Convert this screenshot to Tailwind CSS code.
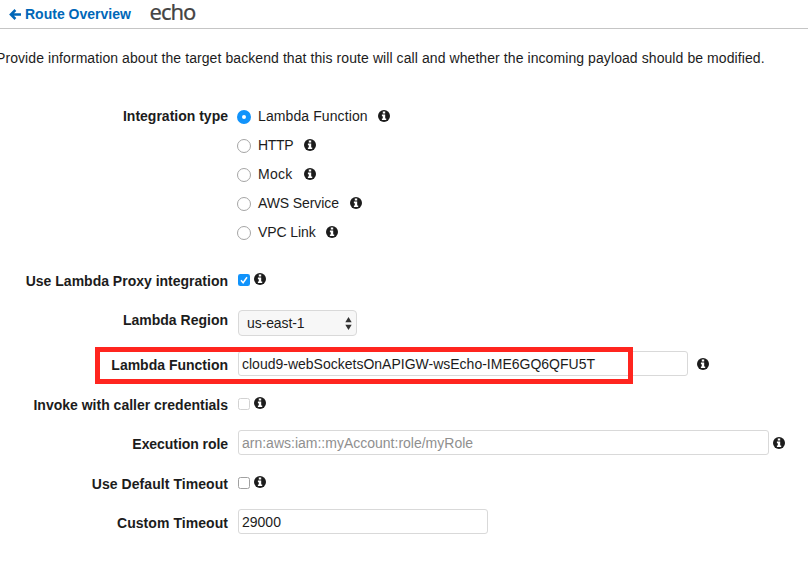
<!DOCTYPE html>
<html lang="en">
<head>
<meta charset="utf-8">
<title>Route Overview</title>
<script src="https://cdn.jsdelivr.net/npm/@tailwindcss/browser@4"></script>
</head>
<body class="relative h-[564px] w-[808px] overflow-hidden bg-white font-['Helvetica_Neue','Liberation_Sans',sans-serif] text-[14px] leading-5 text-[#1c1c1c]">
<svg class="hidden">
  <symbol id="info" viewBox="0 0 12 12"><circle cx="6" cy="6" r="6" fill="#1c1c1c"/><path d="M4.8 1.6h2.4v2H4.8zM3.9 4.6h3.3v3.8h1V10H3.9V8.4h.9V6.2h-.9z" fill="#fff"/></symbol>
</svg>
<header class="flex h-[29px] border-b border-[#c5c5c5]">
  <a class="flex pl-[9px] pt-1 font-bold text-[#0067b8]"><svg class="mt-[5px] mr-1 h-[12px] w-3" viewBox="0 0 12 12"><path d="M6.4 1 1.9 5.5 6.4 10M2.2 5.5H12" fill="none" stroke="#0067b8" stroke-width="2.5"/></svg><span class="w-[107px] whitespace-nowrap">Route Overview</span></a>
  <h1 class="pl-[17.5px] font-['Noto_Sans','Open_Sans',sans-serif] text-[22px] leading-[22px] tracking-[-1px] text-[#444] [-webkit-text-stroke:0.2px_#444]">echo</h1>
</header>
<p class="-ml-[4px] mt-[19px] whitespace-nowrap tracking-[0.08px]">Provide information about the target backend that this route will call and whether the incoming payload should be modified.</p>
<main class="pt-[34px]">
  <section class="flex h-[168px]">
    <div class="w-[228px] pt-1 text-right font-bold">Integration type</div>
    <div class="ml-[9px]">
      <label class="flex h-[29px]"><i class="mt-[8px] mr-[7px] h-[14px] w-[14px] rounded-full border-5 border-[#1193fb] bg-white"></i><span class="mt-1 w-[109px] whitespace-nowrap tracking-[0.1px]">Lambda Function</span><svg class="mt-[8px] ml-[11px] h-3 w-3"><use href="#info"/></svg></label>
      <label class="flex h-[29px]"><i class="mt-[8px] mr-[7px] h-[14px] w-[14px] rounded-full border border-[#a5a5a5]"></i><span class="mt-1 w-[35px] whitespace-nowrap tracking-[-0.3px]">HTTP</span><svg class="mt-[8px] ml-[11px] h-3 w-3"><use href="#info"/></svg></label>
      <label class="flex h-[29px]"><i class="mt-[8px] mr-[7px] h-[14px] w-[14px] rounded-full border border-[#a5a5a5]"></i><span class="mt-1 w-[35px] whitespace-nowrap tracking-[0.3px]">Mock</span><svg class="mt-[8px] ml-[11px] h-3 w-3"><use href="#info"/></svg></label>
      <label class="flex h-[29px]"><i class="mt-[8px] mr-[7px] h-[14px] w-[14px] rounded-full border border-[#a5a5a5]"></i><span class="mt-1 w-[81px] whitespace-nowrap tracking-[-0.1px]">AWS Service</span><svg class="mt-[8px] ml-[11px] h-3 w-3"><use href="#info"/></svg></label>
      <label class="flex h-[29px]"><i class="mt-[8px] mr-[7px] h-[14px] w-[14px] rounded-full border border-[#a5a5a5]"></i><span class="mt-1 w-[57px] whitespace-nowrap tracking-[-0.1px]">VPC Link</span><svg class="mt-[8px] ml-[11px] h-3 w-3"><use href="#info"/></svg></label>
    </div>
  </section>
  <div class="flex h-10">
    <div class="w-[228px] pt-px text-right font-bold">Use Lambda Proxy integration</div>
    <svg class="mt-1 ml-[10px] h-3 w-3" viewBox="0 0 12 12"><rect width="12" height="12" rx="2.3" fill="#1193fb"/><path d="m3 6.3 2.1 2.4L9 3.2" fill="none" stroke="#fff" stroke-width="1.5"/></svg>
    <svg class="mt-[3px] ml-1 h-3 w-3"><use href="#info"/></svg>
  </div>
  <div class="flex h-[41px]">
    <div class="w-[228px] text-right font-bold">Lambda Region</div>
    <div class="ml-[10px] flex h-[26px] w-[119px] justify-between rounded-[4px] border border-[#d9d9d9] bg-[#f7f7f7] pl-2 pr-[4px] pt-[2px]"><span class="tracking-[-0.1px]">us-east-1</span><svg class="mt-1 h-[13px] w-[7px]" viewBox="0 0 7 13"><path d="M3.5 0 6.7 5.3H.3zM3.5 13 6.7 7.7H.3z" fill="#333"/></svg></div>
  </div>
  <div class="flex h-[39px]">
    <div class="w-[228px] pt-1 text-right font-bold">Lambda Function</div>
    <div class="ml-[10px] h-[25px] w-[450px] rounded-[3px] border border-[#d9d9d9] pl-[3px] pt-[2px]">cloud9-webSocketsOnAPIGW-wsEcho-IME6GQ6QFU5T</div>
    <svg class="mt-[7px] ml-[9px] h-3 w-3"><use href="#info"/></svg>
  </div>
  <div class="flex h-10">
    <div class="w-[228px] pt-[5px] text-right font-bold">Invoke with caller credentials</div>
    <i class="mt-2 ml-[10px] h-3 w-3 rounded-[2.5px] border border-[#d2d2d2]"></i>
    <svg class="mt-[7px] ml-1 h-3 w-3"><use href="#info"/></svg>
  </div>
  <div class="flex h-10">
    <div class="w-[228px] pt-1 text-right font-bold tracking-[-0.06px]">Execution role</div>
    <div class="ml-[10px] h-[25px] w-[531px] rounded-[3px] border border-[#d9d9d9] pl-[3px] pt-[2px] text-[#8f8f8f]">arn:aws:iam::myAccount:role/myRole</div>
    <svg class="mt-[7px] ml-[3.5px] h-3 w-3"><use href="#info"/></svg>
  </div>
  <div class="flex h-[39px]">
    <div class="w-[228px] pt-1 text-right font-bold tracking-[0.06px]">Use Default Timeout</div>
    <i class="mt-[7px] ml-[10px] h-3 w-3 rounded-[2.5px] border border-[#a0a0a0]"></i>
    <svg class="mt-[6px] ml-1 h-3 w-3"><use href="#info"/></svg>
  </div>
  <div class="flex">
    <div class="w-[228px] pt-1 text-right font-bold tracking-[0.06px]">Custom Timeout</div>
    <div class="ml-[10px] h-[25px] w-[250px] rounded-[3px] border border-[#d9d9d9] pl-[3px] pt-[2px]">29000</div>
  </div>
</main>
<div class="absolute top-[347px] left-[95px] h-[37px] w-[538px] border-5 border-[#ff251f]"></div>
</body>
</html>
